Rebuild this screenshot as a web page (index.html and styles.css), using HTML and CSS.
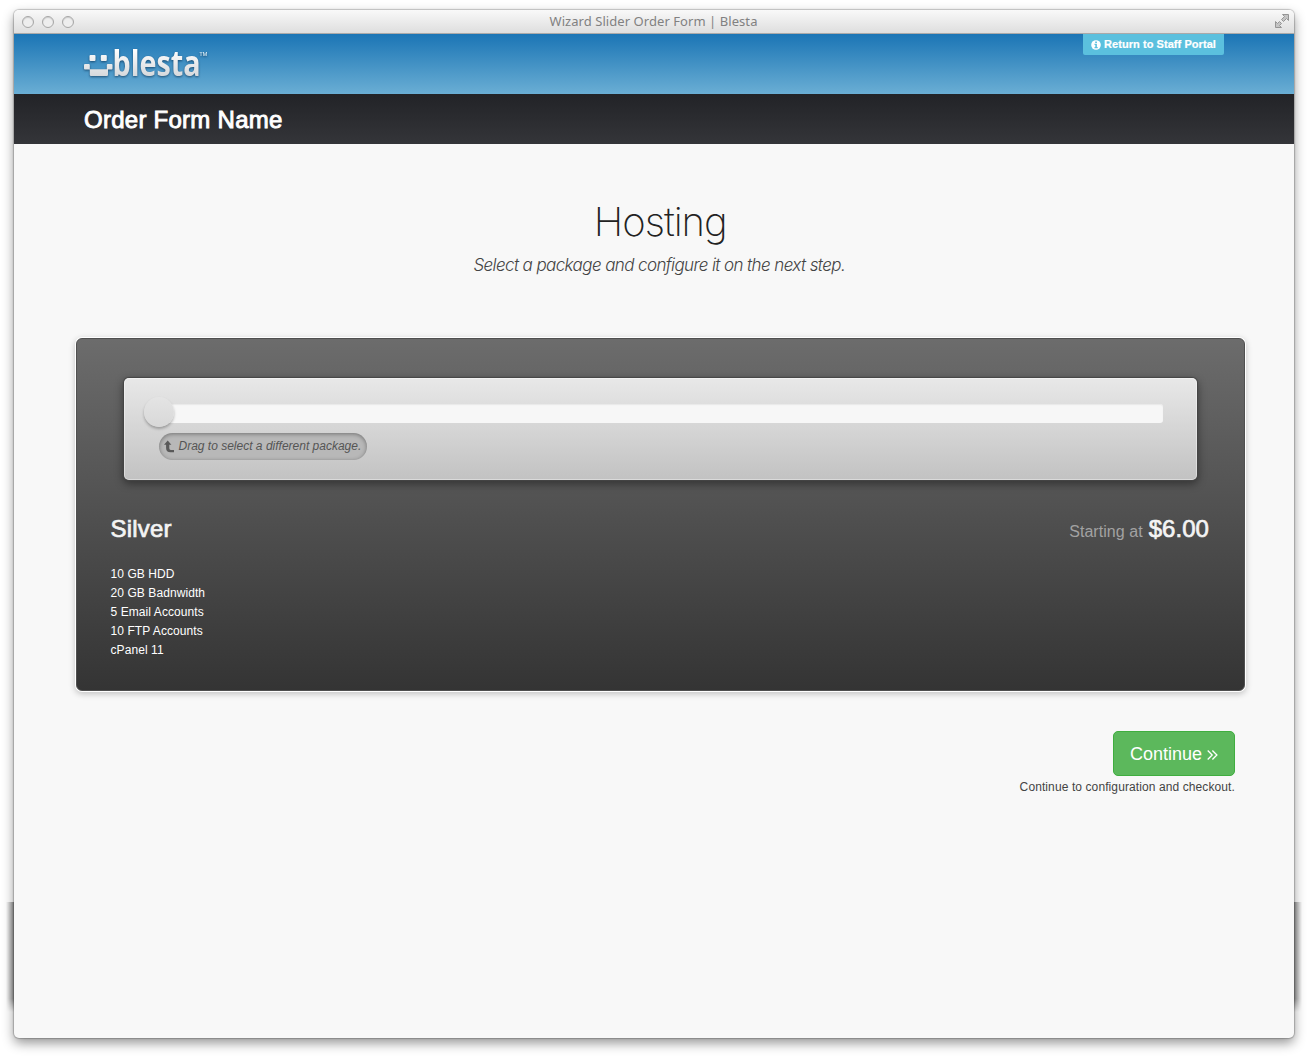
FILE: index.html
```html
<!DOCTYPE html>
<html lang="en">
<head>
<meta charset="utf-8">
<title>Wizard Slider Order Form | Blesta</title>
<link rel="stylesheet" href="styles.css">
</head>
<body>
<div class="window">
  <div class="titlebar">
    <div class="lights"><i></i><i></i><i></i></div>
    <div class="window-title">Wizard Slider Order Form | Blesta</div>
    <svg class="expand" width="16" height="16" viewBox="0 0 16 16"><g fill="#c4c4c4" stroke="#959595" stroke-width="1"><path d="M8.500 .5h6v6l-2-2-3 3-2-2 3-3z"/><path d="M1.500 7.500l2 2 2-2 2 2-2 2 2 2h-6z"/></g></svg>
  </div>
  <header class="header">
    <svg class="logo" width="126" height="36" viewBox="0 0 126 36" role="img" aria-label="blesta">
      <defs><linearGradient id="silver" gradientUnits="userSpaceOnUse" x1="0" y1="3" x2="0" y2="30"><stop offset="0" stop-color="#fff"/><stop offset="1" stop-color="#d6d9dc"/></linearGradient></defs>
      <g fill="url(#silver)">
        <rect x="5.500" y="9" width="6" height="6" rx="1"/><rect x="16.800" y="9" width="6" height="6" rx="1"/>
        <path d="M1 18h3.800q1 0 1 1v4.300h17v-4.300q0-1 1-1h3.700q1 0 1 1v3.600q0 1-1 1h-3.500v5.200q0 1.200-1.200 1.200h-15.800q-1.200 0-1.200-1.200v-5.200h-4.800q-1 0-1-1v-3.600q0-1 1-1z"/>
      </g>
      <text class="logo-text" x="28.500" y="30" textLength="88" lengthAdjust="spacingAndGlyphs" fill="url(#silver)">blesta</text>
      <text class="logo-tm" x="115.500" y="10" textLength="8" lengthAdjust="spacingAndGlyphs" fill="#d5e8f3">TM</text>
    </svg>
    <a class="staff-link"><svg width="10" height="10" viewBox="0 0 10 10"><circle cx="5" cy="5" r="4.800" fill="#fff"/><path d="M4.200 1.400h1.700v1.500h-1.700zM3.500 3.800h2.400v3.200h.8v1.200h-3.200v-1.200h.8v-2h-.8z" fill="#5bc0de"/></svg>Return to Staff Portal</a>
  </header>
  <div class="form-bar"><h1>Order Form Name</h1></div>
  <main class="content">
    <h2 class="heading">Hosting</h2>
    <p class="lead">Select a package and configure it on the next step.</p>
    <section class="panel">
      <div class="slider-box">
        <div class="track"><span class="handle"></span></div>
        <div class="tip"><svg width="10" height="13" viewBox="0 0 10 13"><path d="M0 4.800L3.700 0.500L7.400 4.800H5.300V8.300Q5.300 9.800 6.800 9.900L10 10V12.300H6.500Q2.100 12.300 2.100 8.300V4.800Z" fill="#595959"/></svg><span>Drag to select a different package.</span></div>
      </div>
      <div class="package-head">
        <h3>Silver</h3>
        <div class="price"><span>Starting at</span><strong>$6.00</strong></div>
      </div>
      <ul class="features"><li>10 GB HDD</li><li>20 GB Badnwidth</li><li>5 Email Accounts</li><li>10 FTP Accounts</li><li>cPanel 11</li></ul>
    </section>
    <div class="actions">
      <button class="continue"><span>Continue</span><svg width="11" height="12" viewBox="0 0 11 12" fill="none" stroke="#fff" stroke-width="1.300"><path d="M.7 1.500l4.500 4.500-4.500 4.500M5.400 1.500l4.500 4.500-4.500 4.500"/></svg></button>
      <p>Continue to configuration and checkout.</p>
    </div>
  </main>
  <div class="edge edge-left"></div>
  <div class="edge edge-right"></div>
</div>
</body>
</html>
```
FILE: styles.css
```css
* { box-sizing: border-box; }
body { margin: 0; height: 1058px; padding: 10px 14px 20px; background: #fff; overflow: hidden; font: 13px/19px "Liberation Sans", Arial, sans-serif; }
h1, h2, h3, p, ul { margin: 0; padding: 0; }
.window { position: relative; height: 1028px; background: #f8f8f8; border-radius: 5px; box-shadow: 0 0 1px 1px rgba(0,0,0,.2), 0 5px 12px rgba(0,0,0,.42); }
.titlebar { height: 24px; display: grid; grid-template-columns: 1fr auto 1fr; align-items: center; padding: 0 4px 0 8px; background: linear-gradient(#f9f9f9, #dedede); border-bottom: 1px solid #a9a9a9; border-radius: 5px 5px 0 0; }
.lights { display: flex; gap: 8px; }
.lights i { width: 12px; height: 12px; border: 1px solid #a6a6a6; border-radius: 50%; background: #eee; box-shadow: inset 0 1px 1px #ccc; }
.window-title { padding-right: 5px; font: 13px/20px "Noto Sans", "Open Sans", sans-serif; color: #818181; letter-spacing: .06px; padding-bottom: 2px; }
.expand { justify-self: end; }
.header { height: 60px; display: flex; justify-content: space-between; align-items: flex-start; padding: 0 70px; background: linear-gradient(#1b75b5, #6aaed4); }
.logo { margin-top: 12px; filter: drop-shadow(0 1px 1px rgba(0,30,60,.6)); overflow: visible; }
.logo-text { font: 700 36px "Open Sans", sans-serif; }
.logo-tm { font: 600 6px "Open Sans", sans-serif; }
.staff-link { display: flex; align-items: center; gap: 3px; width: 141px; height: 21px; padding-left: 8px; background: #5bc0de; color: #fff; border-radius: 0 0 2px 2px; font-size: 11px; font-weight: bold; white-space: nowrap; letter-spacing: .06px; -webkit-text-stroke: .2px #fff; }
.form-bar { height: 50px; padding: 0 70px; background: linear-gradient(#222327, #343539); }
.form-bar h1 { font-size: 24px; line-height: 52px; font-weight: 400; letter-spacing: .26px; color: #fff; -webkit-text-stroke: .9px #fff; }
.content { padding: 53px 49px 0 61.500px; display: flex; flex-direction: column; color: #444; }
.heading { text-align: center; font: 250 40px/50px Inter, sans-serif; letter-spacing: -1px; color: #222; }
.lead { text-align: center; font: italic 300 17px/24px Inter, sans-serif; letter-spacing: -.6px; margin-top: 6px; padding-right: 2px; color: #444; }
.panel { margin-top: 61px; height: 353px; padding: 39px 35px 0 34px; border-radius: 6px; background: linear-gradient(#6c6c6c, #343434); border: 1px solid #505050; box-shadow: 0 0 0 1px #fff, 0 2px 6px 1px rgba(0,0,0,.22); color: #fff; }
.slider-box { margin: 0 12px 0 13px; height: 102px; padding: 26px 34px 0 35px; border-radius: 5px; background: linear-gradient(#e8e8e8, #c2c2c2); box-shadow: inset 0 0 0 1px rgba(255,255,255,.4), 0 0 1px 1px #454545, 0 3px 9px 1px rgba(0,0,0,.4); }
.track { position: relative; height: 19px; background: #f7f7f7; border-radius: 3px; box-shadow: inset 0 1px 1px #e8e8e8; }
.handle { position: absolute; left: -15px; top: -7px; width: 30px; height: 30px; border-radius: 50%; background: linear-gradient(#e4e4e4, #d8d8d8); box-shadow: 0 2px 3px rgba(0,0,0,.28); }
.tip { display: flex; align-items: center; gap: 5px; width: 208px; height: 27px; margin-top: 10px; padding-left: 5px; border-radius: 14px; background: #b8b8b8; box-shadow: inset 0 1px 4px rgba(0,0,0,.38); color: #555; font-size: 12px; font-style: italic; white-space: nowrap; }
.package-head { display: flex; justify-content: space-between; align-items: baseline; margin-top: 33px; height: 32px; line-height: 32px; }
.package-head h3, .price strong { font-size: 24px; font-weight: 400; color: #f4f4f4; -webkit-text-stroke: .7px #f4f4f4; }
.package-head h3 { letter-spacing: .2px; }
.price { display: flex; align-items: baseline; gap: 6px; font-size: 16px; letter-spacing: .05px; color: #a2a2a2; }
.features { margin-top: 20px; list-style: none; font-size: 12px; line-height: 19px; letter-spacing: .08px; }
.actions { margin-top: 40px; padding-right: 10px; display: flex; flex-direction: column; align-items: flex-end; }
.continue { display: flex; align-items: center; justify-content: center; gap: 5px; width: 122px; height: 45px; padding: 2px 0 0; border: 1px solid #3fae3f; border-radius: 5px; background: #5cb85c; color: #fff; font: 18px "Liberation Sans", Arial, sans-serif; }
.actions p { font-size: 12px; line-height: 20px; letter-spacing: .1px; margin-top: 1px; color: #444; white-space: nowrap; }
.edge { position: absolute; top: 892px; width: 8px; height: 110px; -webkit-mask-image: linear-gradient(#000 88%, transparent); mask-image: linear-gradient(#000 88%, transparent); }
.edge-left { left: -8px; background: linear-gradient(to left, rgba(0,0,0,.42), transparent); }
.edge-right { right: -8px; background: linear-gradient(to right, rgba(0,0,0,.42), transparent); }
```
